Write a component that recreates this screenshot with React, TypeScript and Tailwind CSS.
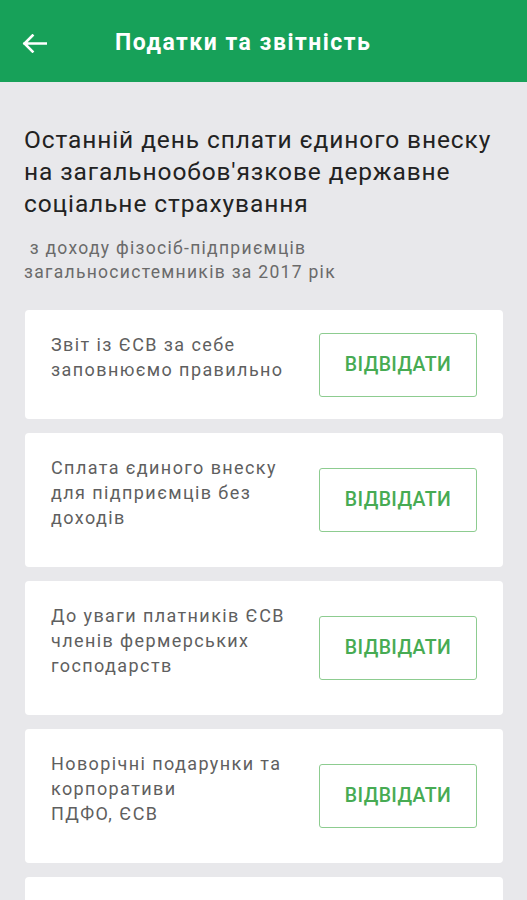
const items = [
  ["Звіт із ЄСВ за себе", "заповнюємо правильно"],
  ["Сплата єдиного внеску", "для підприємців без", "доходів"],
  ["До уваги платників ЄСВ", "членів фермерських", "господарств"],
  ["Новорічні подарунки та", "корпоративи", "ПДФО, ЄСВ"],
];

function BackArrow() {
  return (
    <svg width="25" height="19" viewBox="0 0 25 19" fill="none">
      <path
        d="M24 9.5H2.5M10.5 1.5L2.5 9.5L10.5 17.5"
        stroke="white"
        strokeWidth="2.6"
        strokeLinecap="square"
      />
    </svg>
  );
}

function Card({ lines }: { lines: string[] }) {
  return (
    <div className="flex items-center justify-between rounded-[4px] bg-white py-[21.5px] pl-[26px] pr-[26px]">
      <div className="pb-[16px] text-[18px] leading-[25px] tracking-[1.4px] text-[#5f5f5f]">
        {lines.map((l) => (
          <div key={l}>{l}</div>
        ))}
      </div>
      <button className="flex h-[64px] w-[158px] shrink-0 items-center justify-center rounded-[3px] border-[1.5px] border-[#8dcc90] text-[19.5px] font-medium tracking-[0.4px] text-[#47ab53]">
        ВІДВІДАТИ
      </button>
    </div>
  );
}

export default function App() {
  return (
    <div
      className="h-[900px] overflow-hidden bg-[#e8e8eb]"
      style={{ fontFamily: "Roboto, 'Noto Sans', sans-serif" }}
    >
      <div className="flex h-[82px] items-center bg-[#17a159] pl-[22px] pt-[5px]">
        <BackArrow />
        <h1 className="ml-[68px] text-[23px] font-bold tracking-[1.5px] text-white">
          Податки та звітність
        </h1>
      </div>

      <div className="px-[24px]">
        <h2 className="mt-[42px] text-[24.5px] leading-[32px] tracking-[0.9px] text-[#222]">
          Останній день сплати єдиного внеску на загальнообов'язкове
          державне соціальне страхування
        </h2>
        <p className="mt-[16px] text-[17.5px] leading-[24px] tracking-[1.3px] text-[#6a6a6a]">
          &nbsp;з доходу фізосіб-підприємців
          <br />
          загальносистемників за 2017 рік
        </p>

        <div className="mt-[26px] flex flex-col gap-[14px] pl-[1px]">
          {items.map((lines) => (
            <Card key={lines[0]} lines={lines} />
          ))}
          <div className="h-[110px] rounded-[4px] bg-white" />
        </div>
      </div>
    </div>
  );
}
